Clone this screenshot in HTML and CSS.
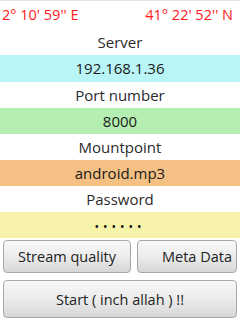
FILE: index.html
```html
<!DOCTYPE html>
<html lang="en">
<head>
    <meta charset="UTF-8">
    <meta name="viewport" content="width=device-width, initial-scale=1.0">
    <title>Stream</title>
    <link rel="stylesheet" href="styles.css">
</head>
<body>
    <div class="coords">
        <span>2° 10' 59'' E</span>
        <span>41° 22' 52'' N</span>
    </div>

    <div class="label">Server</div>
    <div class="field field-server">192.168.1.36</div>
    <div class="label">Port number</div>
    <div class="field field-port">8000</div>
    <div class="label">Mountpoint</div>
    <div class="field field-mount">android.mp3</div>
    <div class="label">Password</div>
    <div class="field field-pass"><span class="dots">••••••</span></div>

    <div class="btn-row">
        <button class="btn btn-quality">Stream quality</button>
        <button class="btn btn-meta">Meta Data</button>
    </div>
    <div class="btn-row">
        <button class="btn btn-start">Start ( inch allah ) !!</button>
    </div>
</body>
</html>
```

FILE: styles.css
```css
body {
    font-family: "Open Sans", "Noto Sans", sans-serif;
    background-color: #ffffff;
    margin: 0;
    padding: 0;
    width: 240px;
    border-top: 1px solid #e2e2e2;
}

.coords {
    display: flex;
    justify-content: space-between;
    height: 28px;
    line-height: 28px;
    padding: 0 7px 0 2px;
    color: #ff1a1a;
    font-size: 14.5px;
}

.label,
.field {
    height: 26px;
    line-height: 26px;
    text-align: center;
    font-size: 15px;
    color: #2a2a2a;
}

.field {
    color: #1a1a1a;
}

.field-server {
    background-color: #b9f5f7;
    height: 27px;
    line-height: 27px;
}

.field-port {
    background-color: #b4eeb0;
}

.field-mount {
    background-color: #f5c084;
}

.field-pass {
    background-color: #f7f2aa;
}

.dots {
    font-size: 12px;
    letter-spacing: 4px;
    color: #000;
}

.btn-row {
    display: flex;
    gap: 6px;
    padding: 0 3px;
}

.btn {
    font-family: "Open Sans", "Noto Sans", sans-serif;
    font-size: 14.5px;
    color: #222;
    border: 1px solid #a8a8a8;
    border-radius: 4px;
    background: linear-gradient(#f8f8f8, #ececec 50%, #d6d6d6);
    padding: 0;
}

.btn-quality {
    width: 128px;
    height: 33px;
    margin-top: 2px;
}

.btn-meta {
    flex: 1;
    height: 33px;
    margin-top: 2px;
    padding-left: 20px;
}

.btn-start {
    flex: 1;
    height: 38px;
    margin-top: 7px;
}
```
